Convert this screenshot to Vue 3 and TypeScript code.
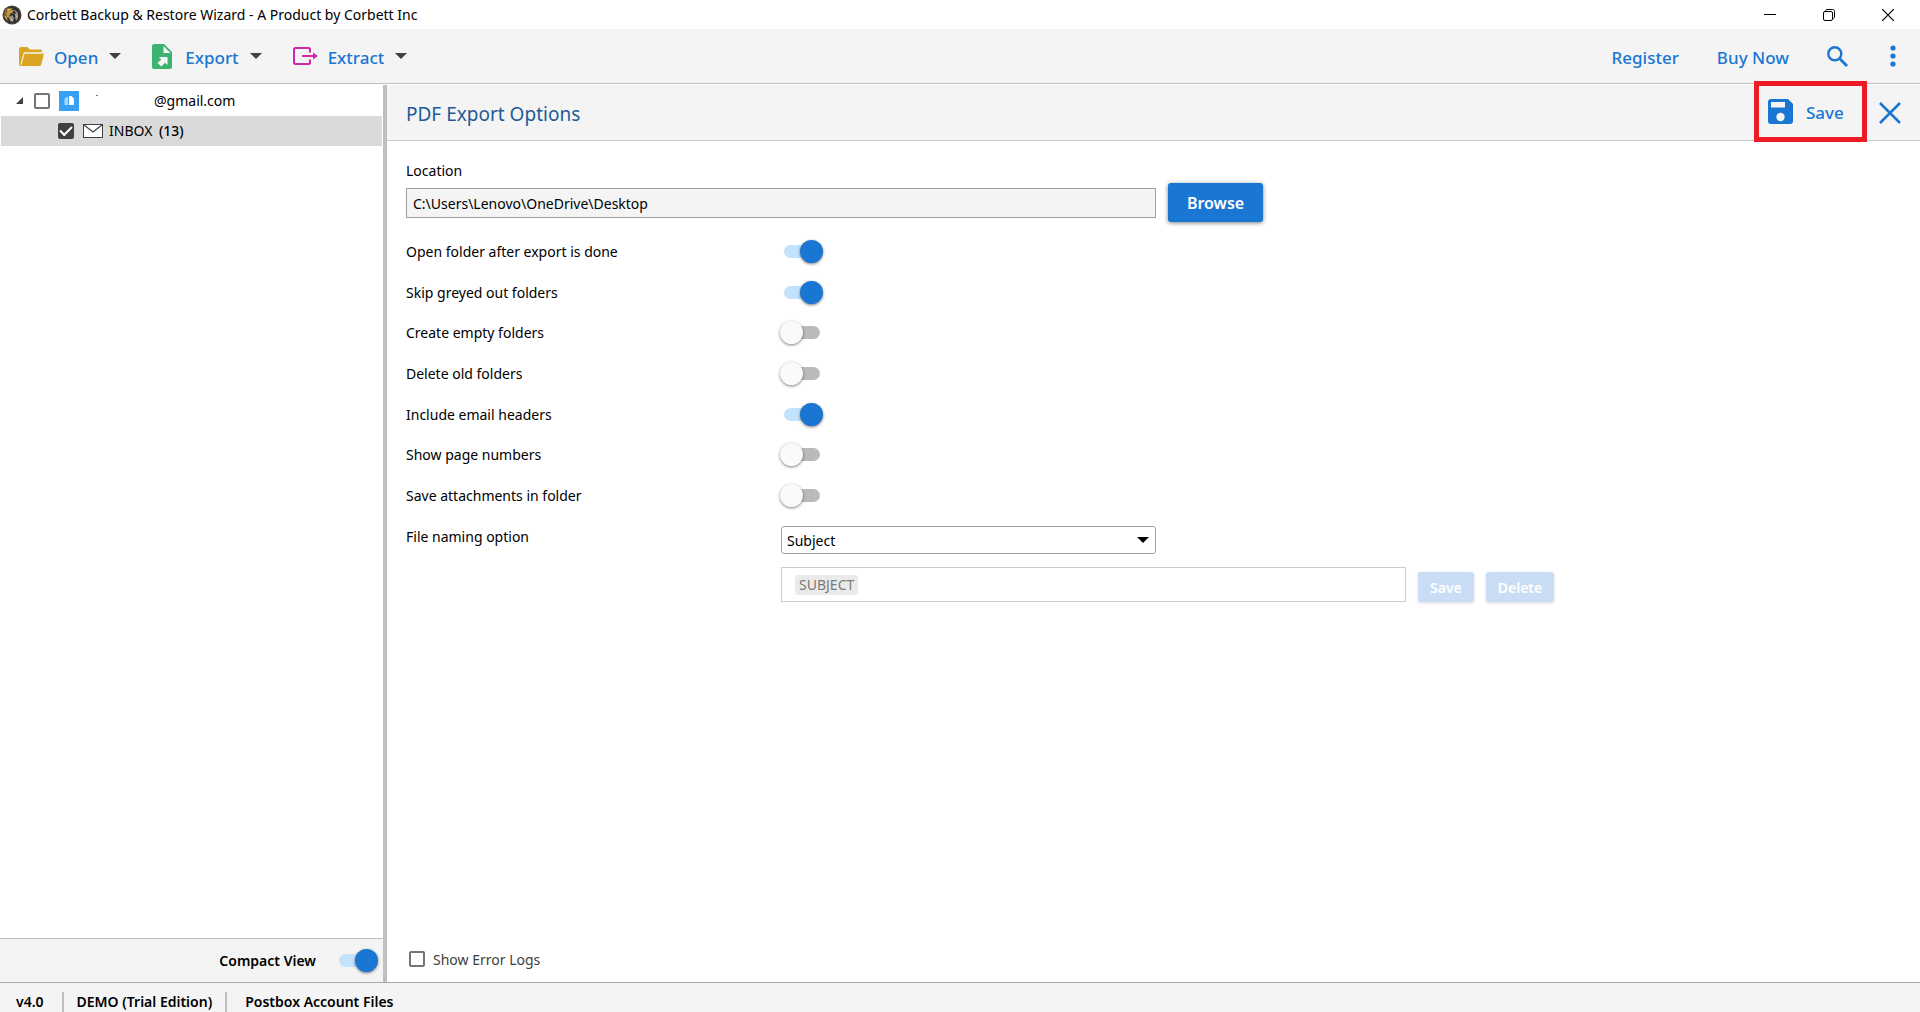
<script setup lang="ts">
import { ref } from 'vue'

interface ExportOption {
  id: string
  label: string
  on: boolean
}

const options = ref<ExportOption[]>([
  { id: 'open-folder', label: 'Open folder after export is done', on: true },
  { id: 'skip-greyed', label: 'Skip greyed out folders', on: true },
  { id: 'create-empty', label: 'Create empty folders', on: false },
  { id: 'delete-old', label: 'Delete old folders', on: false },
  { id: 'email-headers', label: 'Include email headers', on: true },
  { id: 'page-numbers', label: 'Show page numbers', on: false },
  { id: 'save-attachments', label: 'Save attachments in folder', on: false },
])

const location = ref('C:\\Users\\Lenovo\\OneDrive\\Desktop')
const naming = ref('Subject')
const compactView = ref(true)
const showLogs = ref(false)
const accountChecked = ref(false)
const inboxChecked = ref(true)
</script>

<template>
  <div class="window">
    <header class="titlebar">
      <svg class="app-logo" width="20" height="20" viewBox="0 0 20 20" aria-hidden="true">
        <circle cx="10" cy="10" r="9.5" fill="#4a4334" />
        <circle cx="10" cy="10" r="8" fill="#2b2a2c" />
        <path d="M2 10a8 8 0 0 1 5-7.500l1 2-3 3 0 6 2 3a8 8 0 0 1-5-6.500z" fill="#8a6d2c" />
        <path d="M5 7c2-3 3-4 6-4l-2 2 4 0-3 2 3 2-4-1-2 3 1 4-2-3-1 1z" fill="#c09a45" />
        <path d="M12 4l4 4 0 5-2 3-1-4 1-3zM7 12l3-2 2 3-1 4-3-1z" fill="#9a9488" />
        <path d="M5 5l3-1M13 9l2 3M9 14l2 2M3 11l2 3" stroke="#d9c48a" stroke-width="1" />
      </svg>
      <span class="title">Corbett Backup &amp; Restore Wizard - A Product by Corbett Inc</span>
      <div class="window-controls">
        <button type="button" aria-label="Minimize">
          <svg width="12" height="12" viewBox="0 0 12 12"><path d="M0 5.5h12" stroke="#000" /></svg>
        </button>
        <button type="button" aria-label="Restore">
          <svg width="12" height="12" viewBox="0 0 12 12" fill="none" stroke="#000">
            <rect x="0.5" y="2.5" width="9" height="9" rx="1.5" />
            <path d="M2.5 2.2V2c0-1 .6-1.5 1.500-1.500h5.500c1.200 0 2 .8 2 2v5.500c0 .9-.6 1.500-1.500 1.500h-.3" />
          </svg>
        </button>
        <button type="button" aria-label="Close window">
          <svg width="12" height="12" viewBox="0 0 12 12"><path d="M0 0l12 12M12 0L0 12" stroke="#000" stroke-width="1.200" /></svg>
        </button>
      </div>
    </header>

    <nav class="toolbar">
      <button type="button" class="tool">
        <svg width="25" height="19" viewBox="0 0 25 19" aria-hidden="true">
          <path d="M2 0h6.500l2.500 2.500h10.500a1.500 1.500 0 0 1 1.500 1.500v1.500H5.500L2.500 17V19H2a2 2 0 0 1-2-2V2a2 2 0 0 1 2-2z" fill="#daa520" />
          <path d="M5.500 6.500H25L22.300 17.500a2 2 0 0 1-2 1.500H2.200z" fill="#daa520" />
          <path d="M23 6H5L2 17.500" fill="none" stroke="#f4f4f4" stroke-width="1" />
        </svg>
        <span>Open</span>
        <i class="caret"></i>
      </button>
      <button type="button" class="tool">
        <svg width="20" height="25" viewBox="0 0 20 25" aria-hidden="true">
          <path d="M2 0h10l8 8v15a2 2 0 0 1-2 2H2a2 2 0 0 1-2-2V2a2 2 0 0 1 2-2z" fill="#3cb371" />
          <path d="M11.500 2v7h7z" fill="#f4f4f4" />
          <path d="M7 13h8.500v8l-2.500-2.300L9.300 22.500 5.500 19l3.800-3.500z" fill="#f4f4f4" />
        </svg>
        <span>Export</span>
        <i class="caret"></i>
      </button>
      <button type="button" class="tool">
        <svg width="25" height="18" viewBox="0 0 25 18" aria-hidden="true">
          <path d="M17 5.500V2.500a1.500 1.500 0 0 0-1.500-1.500H2.500A1.500 1.500 0 0 0 1 2.500v13A1.500 1.500 0 0 0 2.500 17h13a1.500 1.500 0 0 0 1.500-1.500v-3" fill="none" stroke="#d326ac" stroke-width="2" />
          <path d="M9 9h12" stroke="#d326ac" stroke-width="2" />
          <path d="M20 5.500L25 9l-5 3.500z" fill="#d326ac" />
        </svg>
        <span>Extract</span>
        <i class="caret"></i>
      </button>
      <div class="toolbar-right">
        <a href="#register">Register</a>
        <a href="#buy">Buy Now</a>
        <button type="button" class="search" aria-label="Search">
          <svg width="21" height="21" viewBox="0 0 21 21" fill="none" stroke="#1976d2">
            <circle cx="7.800" cy="7.800" r="6.500" stroke-width="2.400" />
            <path d="M12.800 12.800l7.200 7.200" stroke-width="2.800" />
          </svg>
        </button>
        <button type="button" aria-label="More">
          <svg width="6" height="22" viewBox="0 0 6 22" fill="#1976d2">
            <circle cx="3" cy="3" r="2.600" /><circle cx="3" cy="11" r="2.600" /><circle cx="3" cy="19" r="2.600" />
          </svg>
        </button>
      </div>
    </nav>

    <div class="body">
      <aside class="sidebar">
        <div class="node">
          <svg class="expander" width="7" height="7" viewBox="0 0 7 7" aria-hidden="true"><path d="M7 0v7H0z" fill="#404040" /></svg>
          <input v-model="accountChecked" type="checkbox" class="tick" aria-label="Select account" />
          <svg class="account-icon" width="20" height="20" viewBox="0 0 20 20" aria-hidden="true">
            <rect width="20" height="20" fill="#35a0f4" />
            <path d="M10 5h2.500l2.500 2.500V14h-5z" fill="#fff" />
            <path d="M9 6H7.500L5.500 8v6H9z" fill="#a9d7fb" />
          </svg>
          <i class="speck"></i>
          <span>@gmail.com</span>
        </div>
        <div class="node child">
          <input id="inbox" v-model="inboxChecked" type="checkbox" class="tick" />
          <svg class="mail" width="20" height="14" viewBox="0 0 20 14" fill="#fff" stroke="#404040" aria-hidden="true">
            <rect x="0.500" y="0.500" width="19" height="13" /><path d="M1 1l9 7 9-7" stroke-width="1.200" />
          </svg>
          <label for="inbox">INBOX <b>(13)</b></label>
        </div>
        <div class="sidebar-footer">
          <label for="compact">Compact View</label>
          <input id="compact" v-model="compactView" type="checkbox" class="switch" />
        </div>
      </aside>

      <main class="panel">
        <div class="panel-header">
          <h1>PDF Export Options</h1>
          <button type="button" class="save">
            <svg width="25" height="25" viewBox="0 0 25 25" aria-hidden="true">
              <path d="M3 0h17l5 5v17a3 3 0 0 1-3 3H3a3 3 0 0 1-3-3V3a3 3 0 0 1 3-3z" fill="#1976d2" />
              <rect x="3" y="3" width="14" height="5.500" fill="#f4f4f4" />
              <circle cx="12.500" cy="18" r="4.200" fill="#f4f4f4" />
            </svg>
            <span>Save</span>
          </button>
          <button type="button" class="close" aria-label="Close options">
            <svg width="22" height="22" viewBox="0 0 22 22"><path d="M1 1l20 20M21 1L1 21" stroke="#1976d2" stroke-width="2.500" /></svg>
          </button>
        </div>

        <form class="form" @submit.prevent>
          <label for="location" class="location-label">Location</label>
          <div class="location-row">
            <input id="location" v-model="location" type="text" readonly />
            <button type="button" class="browse">Browse</button>
          </div>

          <div class="options">
            <div v-for="option in options" :key="option.id" class="option">
              <label :for="option.id">{{ option.label }}</label>
              <input :id="option.id" v-model="option.on" type="checkbox" class="switch" />
            </div>
          </div>

          <div class="naming">
            <label for="naming">File naming option</label>
            <div class="naming-fields">
              <div class="select-wrap">
                <select id="naming" v-model="naming">
                  <option>Subject</option>
                </select>
                <i class="caret select-caret"></i>
              </div>
              <div class="pattern-row">
                <div class="pattern"><span>SUBJECT</span></div>
                <button type="button" class="small" disabled>Save</button>
                <button type="button" class="small" disabled>Delete</button>
              </div>
            </div>
          </div>
        </form>

        <div class="logs">
          <input id="logs" v-model="showLogs" type="checkbox" class="tick" />
          <label for="logs">Show Error Logs</label>
        </div>
      </main>
    </div>

    <footer class="status">
      <span>v4.0</span>
      <span>DEMO (Trial Edition)</span>
      <span>Postbox Account Files</span>
    </footer>
  </div>
</template>

<style>
body {
  margin: 0;
}
</style>

<style scoped>
.window {
  display: flex;
  flex-direction: column;
  min-height: 100vh;
  background: #fff;
  color: #000;
  font: 14px/20px 'Noto Sans', 'Open Sans', sans-serif;
}
.window * {
  box-sizing: border-box;
}
svg {
  display: block;
  flex: none;
}
button,
input,
select {
  margin: 0;
  font: inherit;
  color: inherit;
}
button {
  padding: 0;
  border: 0;
  background: none;
}
a {
  color: inherit;
  text-decoration: none;
}

.titlebar {
  display: flex;
  align-items: center;
  height: 29px;
  padding: 0 26px 0 2px;
}
.app-logo {
  margin-right: 5px;
}
.window-controls {
  display: flex;
  gap: 47px;
  margin-left: auto;
}

.toolbar {
  display: flex;
  align-items: center;
  height: 55px;
  padding: 0 24px 0 19px;
  border-bottom: 1px solid #bfbfbf;
  background: #f4f4f4;
  color: #1976d2;
  font-size: 17px;
  font-weight: 500;
}
.tool span,
.toolbar a {
  padding-top: 4px;
}
.tool {
  display: flex;
  align-items: center;
  margin-right: 31px;
}
.tool svg {
  margin-right: 10px;
}
.tool:nth-child(2) svg {
  margin-right: 13px;
}
.caret {
  width: 0;
  border: 6px solid transparent;
  border-top-color: #404040;
  border-bottom: 0;
}
.tool .caret {
  margin-left: 11px;
}
.toolbar-right {
  display: flex;
  align-items: center;
  gap: 38px;
  margin-left: auto;
}
.search {
  margin-right: 4px;
}

.body {
  display: flex;
  flex: 1;
  padding-top: 1px;
}
.sidebar {
  display: flex;
  flex: none;
  flex-direction: column;
  width: 383px;
}
.node {
  display: flex;
  align-items: center;
  height: 31px;
  padding-left: 16px;
}
.expander {
  margin-right: 11px;
}
.tick {
  display: grid;
  place-items: center;
  flex: none;
  width: 16px;
  height: 16px;
  border: 2px solid #757575;
  border-radius: 2px;
  background: #fff;
  appearance: none;
}
.tick:checked {
  border-color: #404040;
  background: #404040;
}
.tick:checked::before {
  content: '';
  width: 10px;
  height: 5px;
  margin-bottom: 3px;
  border: solid #fff;
  border-width: 0 0 2px 2px;
  transform: rotate(-45deg);
}
.account-icon {
  margin: 0 17px 0 9px;
}
.speck {
  width: 2px;
  height: 1px;
  margin: 0 56px 10px 0;
  background: #777;
}
.child {
  height: 30px;
  margin: 0 1px;
  padding: 0 0 1px 57px;
  background: #dadada;
}
.mail {
  margin: 0 6px 0 9px;
}
.child b {
  margin-left: 3px;
  font-weight: 500;
}
.sidebar-footer {
  display: flex;
  align-items: center;
  justify-content: flex-end;
  height: 44px;
  margin-top: auto;
  padding-right: 5px;
  border-top: 1px solid #bfbfbf;
  background: #f4f4f4;
  font-weight: 600;
}
.sidebar-footer .switch {
  margin-left: 19px;
}

.switch {
  position: relative;
  flex: none;
  width: 43px;
  height: 23px;
  appearance: none;
}
.switch::before {
  content: '';
  position: absolute;
  inset: 5px 3px 5px 4px;
  border-radius: 7px;
  background: #bababa;
}
.switch::after {
  content: '';
  position: absolute;
  top: 0;
  left: 0;
  width: 23px;
  height: 23px;
  border-radius: 50%;
  background: #fafafa;
  box-shadow: 0 1px 3px rgba(0, 0, 0, 0.5);
}
.switch:checked::before {
  background: #c3e2fb;
}
.switch:checked::after {
  left: 20px;
  background: #1976d2;
}

.panel {
  display: flex;
  flex: 1;
  flex-direction: column;
  border-left: 4px solid #bfbfbf;
}
.panel-header {
  display: flex;
  align-items: center;
  height: 56px;
  padding: 0 19px;
  border-bottom: 1px solid #ccc;
  background: #f4f4f4;
}
h1 {
  margin: 0;
  padding-top: 2px;
  color: #1f5a96;
  font-size: 19px;
  font-weight: 400;
}
.save {
  display: flex;
  align-items: center;
  gap: 13px;
  width: 113px;
  height: 61px;
  margin: -5px 12px -3px auto;
  padding-left: 9px;
  border: 5px solid #ed1c24;
  color: #1976d2;
  font-size: 17px;
  font-weight: 500;
}
.save span {
  padding-top: 2px;
}

.form {
  padding: 20px 19px 0;
}
.location-label {
  display: block;
}
.location-row {
  display: flex;
  align-items: center;
  gap: 12px;
  margin-top: 2px;
}
#location {
  flex: 0 1 750px;
  height: 30px;
  padding: 1px 6px 0;
  border: 1px solid #a0a0a0;
  background: #f4f4f4;
}
.browse {
  width: 95px;
  height: 39px;
  border-radius: 3px;
  background: #1976d2;
  box-shadow: 0 1px 4px rgba(0, 0, 0, 0.5);
  color: #fff;
  font-size: 16px;
  font-weight: 600;
}
.options {
  display: grid;
  grid-auto-rows: 1fr;
  height: 285px;
  margin-top: 9px;
}
.option,
.naming {
  display: grid;
  grid-template-columns: 374px 1fr;
  align-items: center;
}
.option label,
.naming label {
  padding-top: 1px;
}
.naming {
  align-items: start;
  margin-top: 10px;
}
.naming-fields {
  display: flex;
  flex-direction: column;
  gap: 13px;
  padding-left: 1px;
}
.select-wrap {
  position: relative;
  max-width: 375px;
}
#naming {
  width: 100%;
  height: 28px;
  padding: 1px 5px 0;
  border: 1px solid #a0a0a0;
  border-radius: 3px;
  background: #fff;
  appearance: none;
}
.select-caret {
  position: absolute;
  top: 11px;
  right: 7px;
  border-top-color: #000;
}
.pattern-row {
  display: flex;
  align-items: flex-end;
  gap: 12px;
}
.pattern {
  display: flex;
  align-items: center;
  flex: 0 1 625px;
  height: 35px;
  padding-left: 13px;
  border: 1px solid #ccc;
}
.pattern span {
  padding: 0 4px;
  border-radius: 3px;
  background: #eaeaea;
  color: #7a7a7a;
}
.small {
  height: 30px;
  padding: 1px 12px 0;
  border-radius: 3px;
  background: #c9ddf4;
  box-shadow: 0 1px 3px rgba(0, 0, 0, 0.15);
  color: #fff;
  font-weight: 600;
}

.logs {
  display: flex;
  align-items: center;
  gap: 8px;
  height: 46px;
  margin-top: auto;
  padding-left: 22px;
  color: #404040;
}
.logs label {
  padding-top: 2px;
}

.status {
  display: flex;
  align-items: flex-end;
  height: 30px;
  padding-left: 16px;
  border-top: 1px solid #a9a9a9;
  background: #f4f4f4;
  font-weight: 600;
}
.status span + span {
  margin-left: 18px;
  padding-left: 13px;
  border-left: 2px solid #bfbfbf;
}
.status span:last-child {
  margin-left: 13px;
  padding-left: 18px;
}
</style>
